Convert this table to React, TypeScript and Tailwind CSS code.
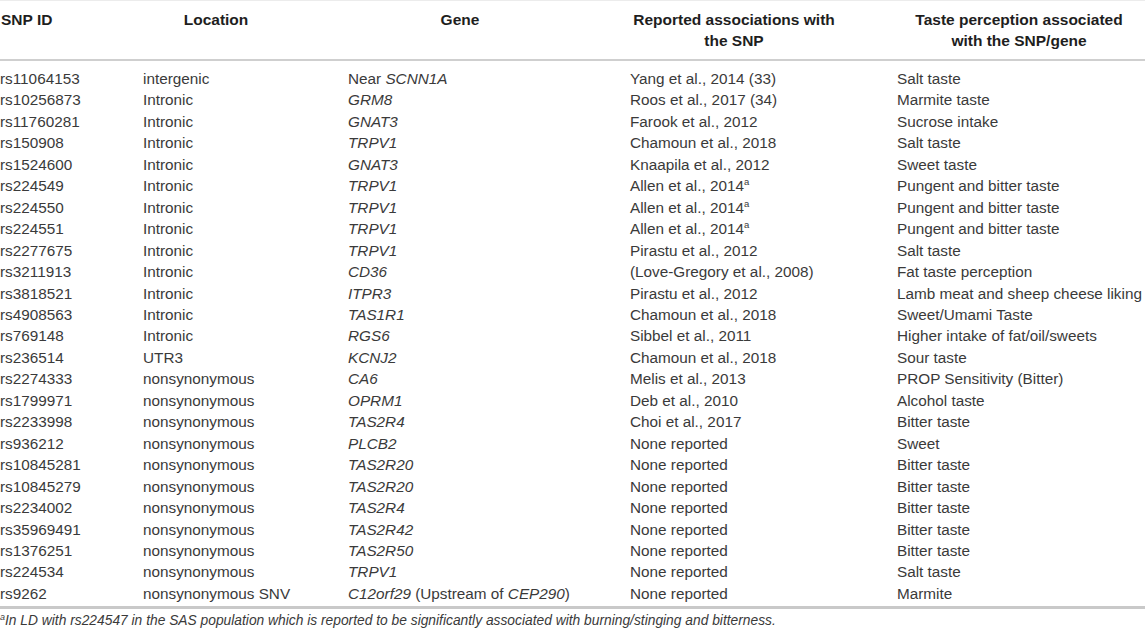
import React from 'react';

type Row = {
  id: string;
  location: string;
  gene: React.ReactNode;
  reported: React.ReactNode;
  taste: string;
};

const sup = <span className="relative -top-[6px] text-[9.5px] leading-none">a</span>;

const rows: Row[] = [
  { id: 'rs11064153', location: 'intergenic', gene: <>Near <i>SCNN1A</i></>, reported: 'Yang et al., 2014 (33)', taste: 'Salt taste' },
  { id: 'rs10256873', location: 'Intronic', gene: <i>GRM8</i>, reported: 'Roos et al., 2017 (34)', taste: 'Marmite taste' },
  { id: 'rs11760281', location: 'Intronic', gene: <i>GNAT3</i>, reported: 'Farook et al., 2012', taste: 'Sucrose intake' },
  { id: 'rs150908', location: 'Intronic', gene: <i>TRPV1</i>, reported: 'Chamoun et al., 2018', taste: 'Salt taste' },
  { id: 'rs1524600', location: 'Intronic', gene: <i>GNAT3</i>, reported: 'Knaapila et al., 2012', taste: 'Sweet taste' },
  { id: 'rs224549', location: 'Intronic', gene: <i>TRPV1</i>, reported: <>Allen et al., 2014{sup}</>, taste: 'Pungent and bitter taste' },
  { id: 'rs224550', location: 'Intronic', gene: <i>TRPV1</i>, reported: <>Allen et al., 2014{sup}</>, taste: 'Pungent and bitter taste' },
  { id: 'rs224551', location: 'Intronic', gene: <i>TRPV1</i>, reported: <>Allen et al., 2014{sup}</>, taste: 'Pungent and bitter taste' },
  { id: 'rs2277675', location: 'Intronic', gene: <i>TRPV1</i>, reported: 'Pirastu et al., 2012', taste: 'Salt taste' },
  { id: 'rs3211913', location: 'Intronic', gene: <i>CD36</i>, reported: '(Love-Gregory et al., 2008)', taste: 'Fat taste perception' },
  { id: 'rs3818521', location: 'Intronic', gene: <i>ITPR3</i>, reported: 'Pirastu et al., 2012', taste: 'Lamb meat and sheep cheese liking' },
  { id: 'rs4908563', location: 'Intronic', gene: <i>TAS1R1</i>, reported: 'Chamoun et al., 2018', taste: 'Sweet/Umami Taste' },
  { id: 'rs769148', location: 'Intronic', gene: <i>RGS6</i>, reported: 'Sibbel et al., 2011', taste: 'Higher intake of fat/oil/sweets' },
  { id: 'rs236514', location: 'UTR3', gene: <i>KCNJ2</i>, reported: 'Chamoun et al., 2018', taste: 'Sour taste' },
  { id: 'rs2274333', location: 'nonsynonymous', gene: <i>CA6</i>, reported: 'Melis et al., 2013', taste: 'PROP Sensitivity (Bitter)' },
  { id: 'rs1799971', location: 'nonsynonymous', gene: <i>OPRM1</i>, reported: 'Deb et al., 2010', taste: 'Alcohol taste' },
  { id: 'rs2233998', location: 'nonsynonymous', gene: <i>TAS2R4</i>, reported: 'Choi et al., 2017', taste: 'Bitter taste' },
  { id: 'rs936212', location: 'nonsynonymous', gene: <i>PLCB2</i>, reported: 'None reported', taste: 'Sweet' },
  { id: 'rs10845281', location: 'nonsynonymous', gene: <i>TAS2R20</i>, reported: 'None reported', taste: 'Bitter taste' },
  { id: 'rs10845279', location: 'nonsynonymous', gene: <i>TAS2R20</i>, reported: 'None reported', taste: 'Bitter taste' },
  { id: 'rs2234002', location: 'nonsynonymous', gene: <i>TAS2R4</i>, reported: 'None reported', taste: 'Bitter taste' },
  { id: 'rs35969491', location: 'nonsynonymous', gene: <i>TAS2R42</i>, reported: 'None reported', taste: 'Bitter taste' },
  { id: 'rs1376251', location: 'nonsynonymous', gene: <i>TAS2R50</i>, reported: 'None reported', taste: 'Bitter taste' },
  { id: 'rs224534', location: 'nonsynonymous', gene: <i>TRPV1</i>, reported: 'None reported', taste: 'Salt taste' },
  {
    id: 'rs9262',
    location: 'nonsynonymous SNV',
    gene: <><i>C12orf29</i> (Upstream of <i>CEP290</i>)</>,
    reported: 'None reported',
    taste: 'Marmite',
  },
];

const cols = 'grid grid-cols-[143px_205px_282px_267px_248px]';

export default function App() {
  return (
    <div className="w-[1145px] h-[639px] bg-white overflow-hidden font-['Liberation_Sans',Arial,sans-serif]">
      <div className="h-[1px] bg-[#ececec]" />

      {/* Header */}
      <div className={`${cols} pt-[8px] pb-[8px] text-[15.5px] leading-[21px] font-bold text-[#1e1e1e]`}>
        <div className="pl-[1px]">SNP ID</div>
        <div className="w-[146px] text-center">Location</div>
        <div className="w-[224px] text-center">Gene</div>
        <div className="w-[208px] text-center">
          Reported associations with
          <br />
          the SNP
        </div>
        <div className="w-[244px] text-center">
          Taste perception associated
          <br />
          with the SNP/gene
        </div>
      </div>
      <div className="h-[2px] bg-[#cfcfcf]" />

      {/* Body */}
      <div className="pt-[7px] pb-[2px] text-[15.3px] leading-[21.45px] text-[#3a3a3a]">
        {rows.map((r) => (
          <div key={r.id} className={`${cols} whitespace-nowrap`}>
            <div>{r.id}</div>
            <div>{r.location}</div>
            <div>{r.gene}</div>
            <div>{r.reported}</div>
            <div>{r.taste}</div>
          </div>
        ))}
      </div>
      <div className="h-[3px] bg-[#c9c9c9]" />

      {/* Footnote */}
      <div className="pt-[3px] text-[13.8px] leading-[18px] italic text-[#3a3a3a]">
        <span className="relative -top-[5px] text-[9px] leading-none">a</span>
        In LD with rs224547 in the SAS population which is reported to be significantly associated with burning/stinging and bitterness.
      </div>
    </div>
  );
}
